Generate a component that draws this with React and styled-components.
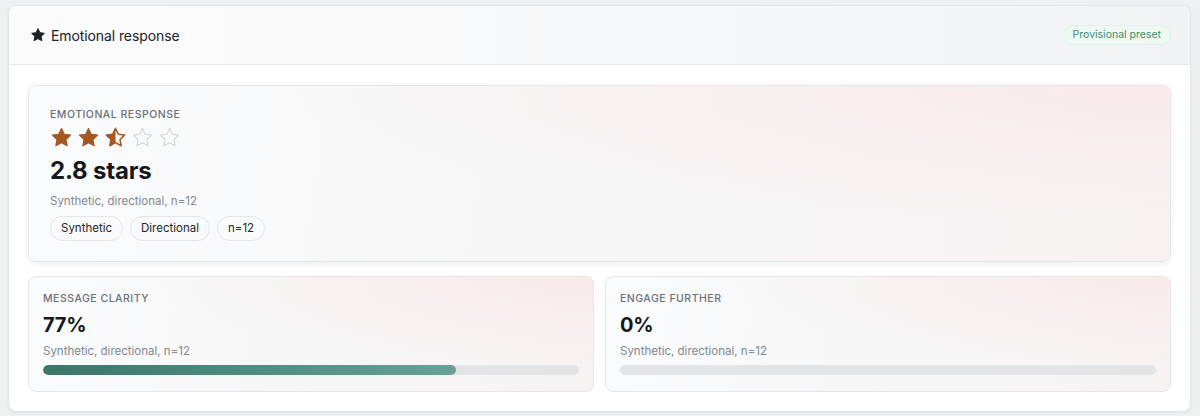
import React from "react";
import styled, { createGlobalStyle } from "styled-components";

const Global = createGlobalStyle`
  html, body { margin: 0; padding: 0; background: #eef0f1; }
  body { font-family: Inter, "Noto Sans", sans-serif; color: #16181d; }
  * { box-sizing: border-box; }
`;

const Page = styled.div`
  padding: 5px 9px 5px 8px;
`;

const Panel = styled.section`
  background: #ffffff;
  border: 1px solid #e3e5e8;
  border-radius: 8px;
  box-shadow: 0 1px 3px rgba(20, 24, 30, 0.05);
  overflow: hidden;
`;

const Header = styled.header`
  height: 59px;
  display: flex;
  align-items: center;
  justify-content: space-between;
  padding: 0 19px 0 21px;
  border-bottom: 1px solid #e5e7ea;
  background: linear-gradient(90deg, #fbfbfc 0%, #f7f8f9 60%, #f1f3f4 100%);
`;

const Title = styled.h2`
  margin: 0;
  display: flex;
  align-items: center;
  gap: 5px;
  font-size: 14px;
  font-weight: 400;
  color: #202227;
  letter-spacing: -0.1px;
`;

const Badge = styled.span`
  font-size: 10.5px;
  font-weight: 400;
  color: #3f8d6c;
  background: #eff9f4;
  border: 1px solid #e2f1ea;
  border-radius: 10px;
  padding: 3px 9px;
  line-height: 12px;
`;

const Body = styled.div`
  padding: 20px 19px 19px 19px;
  display: flex;
  flex-direction: column;
  gap: 14px;
`;

const Card = styled.div`
  border: 1px solid #e4e6e9;
  border-radius: 8px;
  background:
    radial-gradient(ellipse at 100% 0%, rgba(250, 232, 230, 0.75) 0%, rgba(250, 236, 234, 0) 55%),
    linear-gradient(100deg, #fafbfc 0%, #f7f7f8 50%, #f7f3f3 100%);
  box-shadow: ${(p) => (p.$raised ? "0 2px 6px rgba(20, 24, 30, 0.07)" : "none")};
  padding: ${(p) => (p.$raised ? "22px 21px 20px 21px" : "15px 14px 16px 14px")};
  display: flex;
  flex-direction: column;
`;

const Row = styled.div`
  display: grid;
  grid-template-columns: 1fr 1fr;
  gap: 11px;
`;

const Label = styled.div`
  font-size: 10.5px;
  font-weight: 500;
  letter-spacing: 0.5px;
  text-transform: uppercase;
  color: #6c7078;
  line-height: 14px;
`;

const Stars = styled.div`
  display: flex;
  gap: 4px;
  margin-top: 4px;
`;

const BigValue = styled.div`
  font-size: ${(p) => (p.$size ? p.$size : 24)}px;
  font-weight: 700;
  color: #16181d;
  line-height: ${(p) => (p.$size ? p.$size + 6 : 30)}px;
  margin-top: ${(p) => (p.$gap ? p.$gap : 7)}px;
  letter-spacing: -0.2px;
`;

const Sub = styled.div`
  font-size: 11.5px;
  color: #84878d;
  line-height: 16px;
  margin-top: ${(p) => (p.$gap ? p.$gap : 7)}px;
`;

const Chips = styled.div`
  display: flex;
  gap: 7px;
  margin-top: 7px;
`;

const Chip = styled.span`
  font-size: 11.5px;
  color: #24262b;
  border: 1px solid #e3e5e8;
  background: #f9fafb;
  border-radius: 13px;
  padding: 4px 10px;
  line-height: 15px;
`;

const Track = styled.div`
  height: 10px;
  border-radius: 5px;
  background: #e3e4e6;
  margin-top: 6px;
  overflow: hidden;
`;

const Fill = styled.div`
  height: 100%;
  border-radius: 5px;
  background: linear-gradient(90deg, #3b7768 0%, #4e8c7f 50%, #68a196 100%);
`;

const STAR = "M12 2.5l2.94 6.1 6.56.9-4.8 4.6 1.2 6.5L12 17.4l-5.9 3.2 1.2-6.5-4.8-4.6 6.56-.9z";

function Star({ kind }) {
  const c = "#a65823";
  if (kind === "full")
    return (
      <svg width="23" height="23" viewBox="0 0 24 24">
        <path d={STAR} fill={c} stroke={c} strokeWidth="1.2" strokeLinejoin="round" />
      </svg>
    );
  if (kind === "half")
    return (
      <svg width="23" height="23" viewBox="0 0 24 24">
        <defs>
          <clipPath id="lh">
            <rect x="0" y="0" width="12" height="24" />
          </clipPath>
        </defs>
        <path d={STAR} fill={c} clipPath="url(#lh)" />
        <path d={STAR} fill="none" stroke={c} strokeWidth="1.6" strokeLinejoin="round" />
      </svg>
    );
  return (
    <svg width="23" height="23" viewBox="0 0 24 24">
      <path d={STAR} fill="none" stroke="#d6d8db" strokeWidth="1.3" strokeLinejoin="round" />
    </svg>
  );
}

function HeadStar() {
  return (
    <svg width="16" height="16" viewBox="0 0 24 24">
      <path d={STAR} fill="#1d1f23" stroke="#1d1f23" strokeWidth="1.5" strokeLinejoin="round" />
    </svg>
  );
}

function Metric({ label, value, pct }) {
  return (
    <Card>
      <Label>{label}</Label>
      <BigValue $size={20} $gap={6}>{value}</BigValue>
      <Sub $gap={5}>Synthetic, directional, n=12</Sub>
      <Track>
        {pct > 0 && <Fill style={{ width: `${pct}%` }} />}
      </Track>
    </Card>
  );
}

export default function App() {
  return (
    <>
      <Global />
      <Page>
        <Panel>
          <Header>
            <Title>
              <HeadStar />
              Emotional response
            </Title>
            <Badge>Provisional preset</Badge>
          </Header>
          <Body>
            <Card $raised>
              <Label>Emotional response</Label>
              <Stars>
                <Star kind="full" />
                <Star kind="full" />
                <Star kind="half" />
                <Star kind="empty" />
                <Star kind="empty" />
              </Stars>
              <BigValue>2.8 stars</BigValue>
              <Sub>Synthetic, directional, n=12</Sub>
              <Chips>
                <Chip>Synthetic</Chip>
                <Chip>Directional</Chip>
                <Chip>n=12</Chip>
              </Chips>
            </Card>
            <Row>
              <Metric label="Message clarity" value="77%" pct={77} />
              <Metric label="Engage further" value="0%" pct={0} />
            </Row>
          </Body>
        </Panel>
      </Page>
    </>
  );
}
